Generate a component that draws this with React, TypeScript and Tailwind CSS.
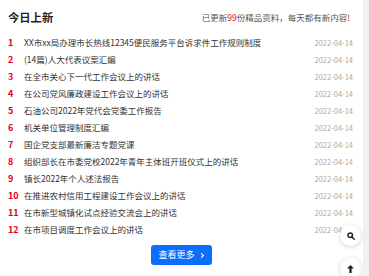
import React from "react";

const items: string[] = [
  "XX市xx局办理市长热线12345便民服务平台诉求件工作规则制度",
  "(14篇)人大代表议案汇编",
  "在全市关心下一代工作会议上的讲话",
  "在公司党风廉政建设工作会议上的讲话",
  "石油公司2022年党代会党委工作报告",
  "机关单位管理制度汇编",
  "国企党支部最新廉洁专题党课",
  "组织部长在市委党校2022年青年主体班开班仪式上的讲话",
  "镇长2022年个人述法报告",
  "在推进农村信用工程建设工作会议上的讲话",
  "在市新型城镇化试点经验交流会上的讲话",
  "在市项目调度工作会议上的讲话",
];

const font = { fontFamily: '"Noto Sans CJK SC", "Noto Sans", sans-serif' };

export default function App() {
  return (
    <div className="relative flex h-[276px] w-[369px] overflow-hidden bg-white" style={font}>
      <div className="w-[363px]">
        <div className="flex h-[34px] items-center justify-between px-2">
          <h2 className="text-[11.3px] font-bold text-[#222]">今日上新</h2>
          <p className="mr-[5px] text-[8.5px] text-[#555]">
            已更新<span className="text-[#e60012]">99</span>份精品资料，每天都有新内容!
          </p>
        </div>
        <ul>
          {items.map((t, i) => (
            <li key={i} className="flex h-[17px] items-center pl-2 pr-[10px]">
              <span className="w-[16px] text-[9px] font-bold text-[#e60012]">{i + 1}</span>
              <span className="flex-1 truncate text-[8.5px] text-[#333]">{t}</span>
              <span className="ml-2 text-[7.5px] text-[#aaa]">2022-04-14</span>
            </li>
          ))}
        </ul>
        <div className="mt-[7px] flex justify-center">
          <button className="flex h-[20px] items-center gap-[5px] rounded-[3px] bg-[#0d6efd] px-[7px] text-[9px] text-white">
            查看更多
            <svg width="5" height="7" viewBox="0 0 6 8" fill="none" stroke="white" strokeWidth="1.4">
              <path d="M1.5 1.5 L4 4 L1.5 6.5" />
            </svg>
          </button>
        </div>
      </div>
      <div className="h-full w-[6px] bg-[#eef2f7]" />
      <div className="absolute left-[340px] top-[225px] flex h-[21px] w-[21px] items-center justify-center rounded-full bg-white shadow-[0_1px_5px_rgba(0,0,0,0.18)]">
        <svg width="8" height="8" viewBox="0 0 10 10" fill="none" stroke="#222" strokeWidth="1.9">
          <circle cx="4" cy="4" r="2.8" />
          <path d="M6 6 L9 9" strokeLinecap="round" />
        </svg>
      </div>
      <div className="absolute left-[340px] top-[258px] flex h-[21px] w-[21px] items-center justify-center rounded-full bg-white shadow-[0_1px_5px_rgba(0,0,0,0.18)]">
        <svg width="7" height="8" viewBox="0 0 8 9" fill="#222">
          <path d="M4 0 L8 4 L5.3 4 L5.3 9 L2.7 9 L2.7 4 L0 4 Z" />
        </svg>
      </div>
    </div>
  );
}
